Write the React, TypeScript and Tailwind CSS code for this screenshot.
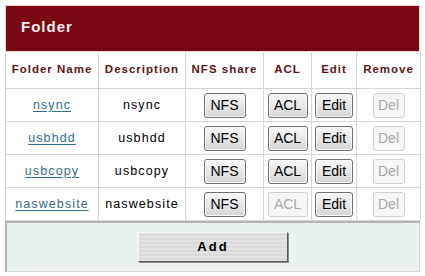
import React from "react";

const rows = [
  { name: "nsync", acl: true },
  { name: "usbhdd", acl: true },
  { name: "usbcopy", acl: true },
  { name: "naswebsite", acl: false },
];

const cell =
  "flex items-center justify-center border-r border-b border-[#d4d4d4]";

function Btn({ label, w, disabled }: { label: string; w: string; disabled?: boolean }) {
  return (
    <div
      className={
        "flex h-[25px] items-center justify-center rounded-[3px] border text-[14px] " +
        w +
        (disabled
          ? " border-[#cfcfcf] bg-[#f6f6f6] text-[#a8a8a8]"
          : " border-[#6f6f6f] bg-[linear-gradient(#f7f7f7,#e6e6e6_55%,#d4d4d4)] text-black shadow-[inset_0_0_0_1px_#fafafa]")
      }
      style={{ fontFamily: '"Liberation Sans", Arial, sans-serif' }}
    >
      {label}
    </div>
  );
}

export default function App() {
  return (
    <div
      className="min-h-[276px] w-[425px] bg-white pl-[5px] pt-[5px]"
      style={{ fontFamily: '"Liberation Sans", Arial, sans-serif' }}
    >
      <div className="w-[415px]">
        <div className="flex h-[47px] items-start border border-[#eed6d6] bg-[#7a0812] pl-[15px] pt-[10px]">
          <span className="text-[15px] font-bold tracking-[1px] text-[#f4ecec]">Folder</span>
        </div>
        <div className="grid grid-cols-[93px_87px_78px_48px_45px_64px] border-l border-[#d4d4d4]">
          {["Folder Name", "Description", "NFS share", "ACL", "Edit", "Remove"].map((h) => (
            <div
              key={h}
              className={cell + " h-[37px] text-[11.5px] font-bold tracking-[1px] text-[#5e1414]"}
            >
              {h}
            </div>
          ))}
          {rows.map((r) => (
            <React.Fragment key={r.name}>
              <div className={cell + " h-[33px]"}>
                <span className="text-[12.5px] tracking-[1.1px] text-[#336c8a] underline underline-offset-[2px]">
                  {r.name}
                </span>
              </div>
              <div className={cell + " h-[33px] text-[12.5px] tracking-[1.1px] text-black"}>{r.name}</div>
              <div className={cell + " h-[33px]"}>
                <Btn label="NFS" w="w-[42px]" />
              </div>
              <div className={cell + " h-[33px]"}>
                <Btn label="ACL" w="w-[40px]" disabled={!r.acl} />
              </div>
              <div className={cell + " h-[33px]"}>
                <Btn label="Edit" w="w-[38px]" />
              </div>
              <div className={cell + " h-[33px]"}>
                <Btn label="Del" w="w-[32px]" disabled />
              </div>
            </React.Fragment>
          ))}
        </div>
        <div className="flex h-[51px] items-center justify-center border-l-2 border-t-2 border-r border-b border-l-[#b0b0b0] border-t-[#b4b4b4] border-r-[#d8d8d8] border-b-[#d8d8d8] bg-[#e9f1f1]">
          <div className="flex h-[30px] w-[150px] items-center justify-center border border-t-[#f4f4f4] border-l-[#f4f4f4] border-r-[#5a5a5a] border-b-[#5a5a5a] bg-[repeating-linear-gradient(180deg,#e4e4e4_0px,#d6d6d6_2px,#e8e8e8_4px)] text-[13px] font-bold tracking-[2px] text-black shadow-[1px_1px_0_#8a8a8a]">
            Add
          </div>
        </div>
      </div>
    </div>
  );
}
